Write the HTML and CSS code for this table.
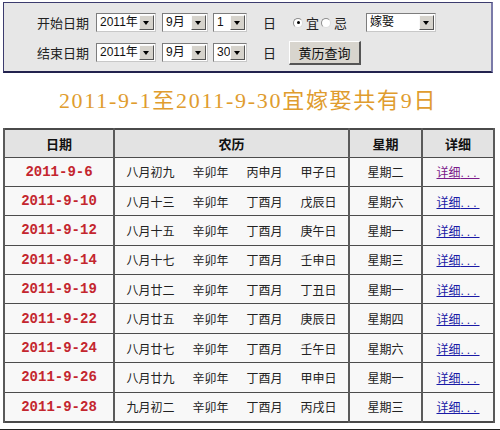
FILE: index.html
```html
<!DOCTYPE html>
<html lang="zh">
<head>
<meta charset="utf-8">
<title>黄历查询</title>
<link rel="stylesheet" href="styles.css">
</head>
<body>
<div class="page">
  <div class="panel">
    <div class="row">
      <span class="label">开始日期</span>
      <span class="sel w-year"><span class="val">2011年</span><span class="arr"></span></span>
      <span class="sel w-month"><span class="val">9月</span><span class="arr"></span></span>
      <span class="sel w-day"><span class="val">1</span><span class="arr"></span></span>
      <span class="unit">日</span>
      <span class="radio on"></span><span class="rlabel">宜</span>
      <span class="radio"></span><span class="rlabel">忌</span>
      <span class="sel w-event"><span class="val">嫁娶</span><span class="arr"></span></span>
    </div>
    <div class="row">
      <span class="label">结束日期</span>
      <span class="sel w-year"><span class="val">2011年</span><span class="arr"></span></span>
      <span class="sel w-month"><span class="val">9月</span><span class="arr"></span></span>
      <span class="sel w-day"><span class="val">30</span><span class="arr"></span></span>
      <span class="unit">日</span>
      <span class="btn">黄历查询</span>
    </div>
  </div>

  <h1 class="title">2011-9-1至2011-9-30宜嫁娶共有9日</h1>

  <table class="cal">
    <tr class="head"><th class="c1">日期</th><th class="c2">农历</th><th class="c3">星期</th><th class="c4">详细</th></tr>
    <tr><td class="d">2011-9-6</td><td class="l"><span>八月初九</span><span>辛卯年</span><span>丙申月</span><span>甲子日</span></td><td>星期二</td><td><a href="#" class="more visited">详细<span class="dots">...</span></a></td></tr>
    <tr><td class="d">2011-9-10</td><td class="l"><span>八月十三</span><span>辛卯年</span><span>丁酉月</span><span>戊辰日</span></td><td>星期六</td><td><a href="#" class="more">详细<span class="dots">...</span></a></td></tr>
    <tr><td class="d">2011-9-12</td><td class="l"><span>八月十五</span><span>辛卯年</span><span>丁酉月</span><span>庚午日</span></td><td>星期一</td><td><a href="#" class="more">详细<span class="dots">...</span></a></td></tr>
    <tr><td class="d">2011-9-14</td><td class="l"><span>八月十七</span><span>辛卯年</span><span>丁酉月</span><span>壬申日</span></td><td>星期三</td><td><a href="#" class="more">详细<span class="dots">...</span></a></td></tr>
    <tr><td class="d">2011-9-19</td><td class="l"><span>八月廿二</span><span>辛卯年</span><span>丁酉月</span><span>丁丑日</span></td><td>星期一</td><td><a href="#" class="more">详细<span class="dots">...</span></a></td></tr>
    <tr><td class="d">2011-9-22</td><td class="l"><span>八月廿五</span><span>辛卯年</span><span>丁酉月</span><span>庚辰日</span></td><td>星期四</td><td><a href="#" class="more">详细<span class="dots">...</span></a></td></tr>
    <tr><td class="d">2011-9-24</td><td class="l"><span>八月廿七</span><span>辛卯年</span><span>丁酉月</span><span>壬午日</span></td><td>星期六</td><td><a href="#" class="more">详细<span class="dots">...</span></a></td></tr>
    <tr><td class="d">2011-9-26</td><td class="l"><span>八月廿九</span><span>辛卯年</span><span>丁酉月</span><span>甲申日</span></td><td>星期一</td><td><a href="#" class="more">详细<span class="dots">...</span></a></td></tr>
    <tr><td class="d">2011-9-28</td><td class="l"><span>九月初二</span><span>辛卯年</span><span>丁酉月</span><span>丙戌日</span></td><td>星期三</td><td><a href="#" class="more">详细<span class="dots">...</span></a></td></tr>
  </table>
</div>
<div class="rule"></div>
</body>
</html>
```

FILE: styles.css
```css
* { box-sizing: border-box; }
html, body { margin: 0; padding: 0; background: #fff; }
body {
  font-family: "Noto Sans CJK SC", "Liberation Sans", sans-serif;
  font-size: 12px;
  color: #222;
}
.page {
  width: 490px;
  margin: 0 0 0 3px;
  padding-top: 2px;
}

/* ---------- query panel ---------- */
.panel {
  height: 71px;
  background: #e7e7e7;
  border: 1px solid #3c3c6e;
  border-right: 2px solid #7a7aa8;
  border-bottom: 2px solid #22224e;
  padding: 10px 0 0 33px;
  display: flex;
  flex-direction: column;
  gap: 11px;
}
.row {
  display: flex;
  align-items: center;
  height: 19px;
}
.label {
  font-size: 13px;
  line-height: 19px;
  color: #222;
  margin-right: 7px;
}
.sel {
  display: flex;
  align-items: center;
  justify-content: space-between;
  height: 19px;
  background: #fff;
  border: 1px solid #7d7d7d;
  border-right-color: #c8c8c8;
  border-bottom-color: #c8c8c8;
  padding: 0 1px 0 3px;
  margin-right: 6px;
}
.val {
  font-family: "Liberation Sans", "Noto Sans CJK SC", sans-serif;
  font-size: 12px;
  line-height: 15px;
  color: #111;
}
.arr {
  position: relative;
  width: 15px;
  height: 15px;
  background: #d6d3cc;
  border-top: 1px solid #fafafa;
  border-left: 1px solid #fafafa;
  border-right: 1px solid #555;
  border-bottom: 1px solid #555;
}
.arr::after {
  content: "";
  position: absolute;
  left: 3px;
  top: 5px;
  border-left: 3.5px solid transparent;
  border-right: 3.5px solid transparent;
  border-top: 4px solid #000;
}
.w-year { width: 60px; }
.w-month { width: 46px; margin-right: 5px; }
.w-day { width: 34px; margin-right: 16px; }
.w-event { width: 70px; margin-left: 17px; margin-right: 0; }
.unit {
  font-size: 13px;
  color: #222;
  margin-right: 17px;
}
.radio {
  width: 10px;
  height: 10px;
  border-radius: 50%;
  background: #fff;
  border: 1px solid #8c8c8c;
  border-right-color: #dcdcdc;
  border-bottom-color: #dcdcdc;
  position: relative;
  margin-right: 3px;
}
.radio.on::after {
  content: "";
  position: absolute;
  left: 2.5px;
  top: 2.5px;
  width: 3px;
  height: 3px;
  border-radius: 50%;
  background: #000;
}
.rlabel {
  font-size: 13px;
  color: #222;
  margin-right: 2px;
}
.btn {
  display: flex;
  align-items: center;
  justify-content: center;
  width: 72px;
  height: 24px;
  margin-left: -4px;
  background: #d8d5ce;
  border-top: 1px solid #fff;
  border-left: 1px solid #fff;
  border-right: 2px solid #555;
  border-bottom: 2px solid #555;
  font-size: 13px;
  color: #111;
}

/* ---------- title ---------- */
.title {
  margin: 0;
  height: 55px;
  padding-top: 15px;
  text-align: center;
  font-family: "Liberation Serif", "Noto Sans CJK SC", serif;
  font-weight: normal;
  font-size: 22px;
  letter-spacing: 1.7px;
  line-height: 26px;
  color: #e09c2e;
}

/* ---------- result table ---------- */
.cal {
  width: 490px;
  border-collapse: collapse;
  border: 2px solid #4a4a4a;
  table-layout: fixed;
}
.cal th, .cal td {
  border-top: 1px solid #4c4c4c;
  border-bottom: 1px solid #4c4c4c;
  border-left: 2px solid #5a5a5a;
  border-right: 2px solid #5a5a5a;
  text-align: center;
  padding: 0;
  white-space: nowrap;
}
.cal tr { height: 29.4px; }
.cal tr.head { height: 28px; }
.cal th {
  background: #e3e3e3;
  font-size: 13px;
  font-weight: bold;
  color: #111;
}
.cal td {
  background: #f8f8f8;
  font-size: 12px;
  color: #222;
}
.c1 { width: 110px; }
.c2 { width: 235px; }
.c3 { width: 73px; }
.c4 { width: 72px; }
.cal td.d {
  font-family: "Liberation Mono", monospace;
  font-weight: bold;
  font-size: 14px;
  color: #c4262e;
}
.l span + span { margin-left: 18px; }
.more {
  color: #1a1aa6;
  text-decoration: underline;
}
.more.visited { color: #7a1a8a; }
.dots {
  letter-spacing: 3px;
  font-family: "Liberation Sans", sans-serif;
}

.rule {
  margin-top: 6px;
  height: 2px;
  background: #222;
  width: 500px;
}
```
